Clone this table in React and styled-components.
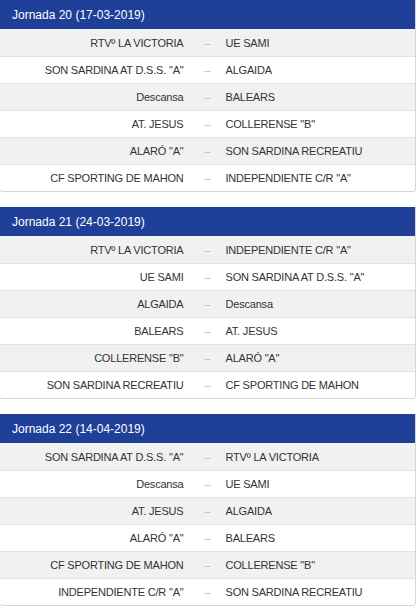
import styled, { createGlobalStyle } from "styled-components";

const GlobalStyle = createGlobalStyle`
    body {
        margin: 0;
        background: #fff;
        font-family: "Liberation Sans", Arial, sans-serif;
    }
`

const Page = styled.div`
    display: flex;
    flex-direction: column;
    gap: 15px;
    width: 416px;
    margin-left: -1px;
`

const Card = styled.section`
    width: 415px;
    border: 1px solid #d6d6d6;
    border-top: none;
    border-radius: 0 0 4px 4px;
    overflow: hidden;
`

const Header = styled.h2`
    margin: 0;
    height: 29px;
    padding-left: 12px;
    display: flex;
    align-items: center;
    background: #1f3f98;
    color: #fff;
    font-size: 12px;
    font-weight: normal;
`

const Row = styled.div`
    display: grid;
    grid-template-columns: 1fr 34px 1fr;
    align-items: center;
    height: 26px;
    border-top: 1px solid #e2e2e2;
    background: ${({ $odd }) => ($odd ? '#f1f1f1' : '#fff')};
    color: #333;
    font-size: 11px;
    letter-spacing: -0.2px;

    &:first-of-type {
        border-top: none;
        height: 27px;
    }
`

const Home = styled.span`
    text-align: right;
    padding-right: 7px;
`

const Dash = styled.span`
    text-align: center;
    color: #bdbdbd;
`

const Away = styled.span`
    padding-left: 1px;
`

const rounds = [
    {
        title: 'Jornada 20 (17-03-2019)',
        games: [
            ['RTVº LA VICTORIA', 'UE SAMI'],
            ['SON SARDINA AT D.S.S. "A"', 'ALGAIDA'],
            ['Descansa', 'BALEARS'],
            ['AT. JESUS', 'COLLERENSE "B"'],
            ['ALARÓ "A"', 'SON SARDINA RECREATIU'],
            ['CF SPORTING DE MAHON', 'INDEPENDIENTE C/R "A"'],
        ],
    },
    {
        title: 'Jornada 21 (24-03-2019)',
        games: [
            ['RTVº LA VICTORIA', 'INDEPENDIENTE C/R "A"'],
            ['UE SAMI', 'SON SARDINA AT D.S.S. "A"'],
            ['ALGAIDA', 'Descansa'],
            ['BALEARS', 'AT. JESUS'],
            ['COLLERENSE "B"', 'ALARÓ "A"'],
            ['SON SARDINA RECREATIU', 'CF SPORTING DE MAHON'],
        ],
    },
    {
        title: 'Jornada 22 (14-04-2019)',
        games: [
            ['SON SARDINA AT D.S.S. "A"', 'RTVº LA VICTORIA'],
            ['Descansa', 'UE SAMI'],
            ['AT. JESUS', 'ALGAIDA'],
            ['ALARÓ "A"', 'BALEARS'],
            ['CF SPORTING DE MAHON', 'COLLERENSE "B"'],
            ['INDEPENDIENTE C/R "A"', 'SON SARDINA RECREATIU'],
        ],
    },
];

const App = () => {
    return (
        <>
            <GlobalStyle />
            <Page>
                {rounds.map((round) => (
                    <Card key={round.title}>
                        <Header>{round.title}</Header>
                        {round.games.map(([home, away], i) => (
                            <Row key={i} $odd={i % 2 === 0}>
                                <Home>{home}</Home>
                                <Dash>–</Dash>
                                <Away>{away}</Away>
                            </Row>
                        ))}
                    </Card>
                ))}
            </Page>
        </>
    );
}

export default App;
